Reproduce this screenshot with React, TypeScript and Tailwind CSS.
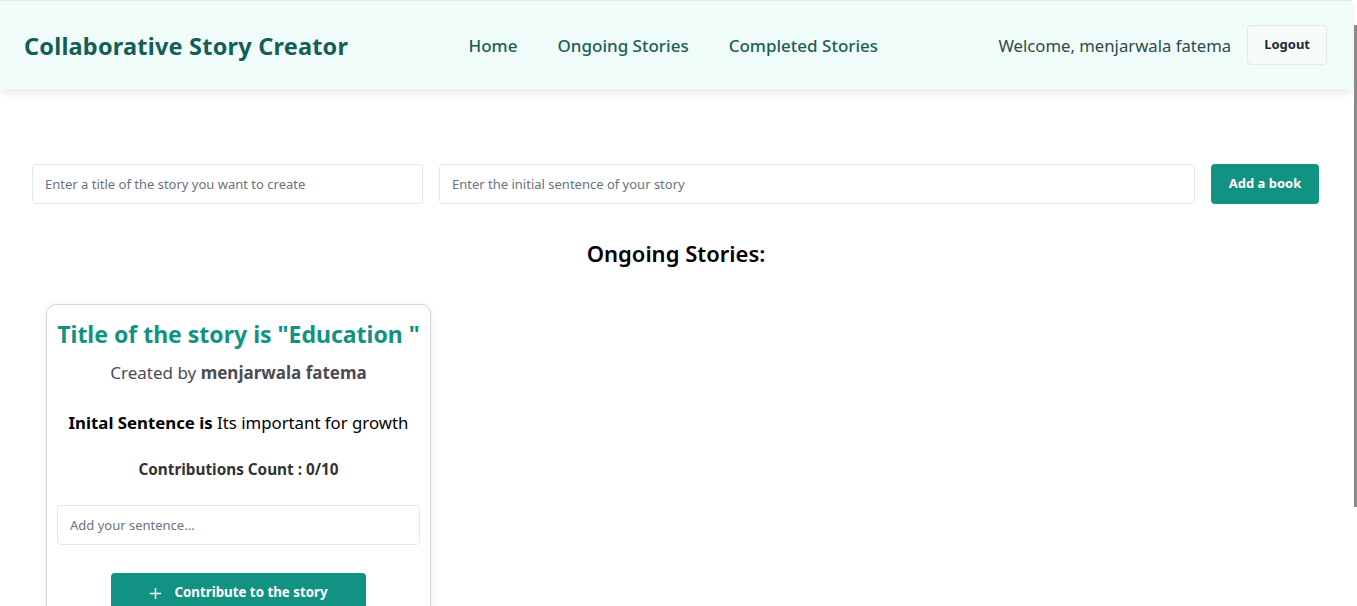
import React from "react";

const font = { fontFamily: '"Noto Sans", "Open Sans", sans-serif' };

export default function App() {
  return (
    <div className="relative min-h-[606px] w-[1352px] bg-white" style={font}>
      <header className="flex h-[89px] items-center justify-between border-t border-gray-200 bg-[#effcfa] px-6 shadow-[0_4px_8px_rgba(0,0,0,0.08)]">
        <h1 className="mt-[3px] text-[23.5px] font-bold tracking-[0.2px] text-[#155e56]">Collaborative Story Creator</h1>
        <nav className="mt-[2px] flex gap-10 text-[17px] font-medium text-[#1b5e55]">
          <a>Home</a>
          <a>Ongoing Stories</a>
          <a>Completed Stories</a>
        </nav>
        <div className="flex items-center gap-4">
          <span className="mt-[2px] text-[16.7px] text-[#2f4b48]">Welcome, menjarwala fatema</span>
          <button className="mr-[1px] h-10 rounded border border-gray-200 bg-[#f6fbfa] px-4 text-[13px] font-bold text-gray-800">Logout</button>
        </div>
      </header>

      <main className="px-8">
        <div className="mt-[75px] flex items-center gap-4 pr-[1px]">
          <input className="h-10 w-[391px] rounded border border-gray-200 px-3 text-[13px] placeholder:text-gray-500" placeholder="Enter a title of the story you want to create" />
          <input className="h-10 flex-1 rounded border border-gray-200 px-3 text-[13px] placeholder:text-gray-500" placeholder="Enter the initial sentence of your story" />
          <button className="h-10 w-[108px] rounded bg-[#129282] text-[13px] font-bold text-white">Add a book</button>
        </div>

        <h2 className="mt-[33px] text-center text-[22px] font-semibold text-black">Ongoing Stories:</h2>

        <div className="ml-[14px] mt-[34px] w-[385px] rounded-[10px] border border-gray-300 bg-white px-[10px] pb-6 pt-3 shadow-[0_2px_8px_rgba(0,0,0,0.08)]">
          <h3 className="text-center text-[23px] font-bold text-[#119383]">Title of the story is "Education "</h3>
          <p className="mt-2 text-center text-[17px] text-[#4b4b55]">Created by <b className="font-bold">menjarwala fatema</b></p>
          <p className="mt-[25px] text-center text-[16.8px] text-black"><b>Inital Sentence is</b> Its important for growth</p>
          <p className="mt-[23px] text-center text-[15.3px] font-bold text-[#333]">Contributions Count : 0/10</p>
          <input className="mt-[24px] h-10 w-full rounded border border-gray-200 px-3 text-[13px] placeholder:text-gray-500" placeholder="Add your sentence..." />
          <div className="mt-7 flex justify-center">
            <button className="flex h-10 w-[255px] items-center justify-center gap-3 rounded bg-[#129282] text-[13.3px] font-bold text-white">
              <svg width="13" height="13" viewBox="0 0 14 14" stroke="white" strokeWidth="1.6" fill="none"><path d="M7 1v12M1 7h12" /></svg>
              Contribute to the story
            </button>
          </div>
        </div>
      </main>
      <div className="fixed right-0 top-[25px] h-[482px] w-[3px] bg-[#8a8a8a]" />
    </div>
  );
}
